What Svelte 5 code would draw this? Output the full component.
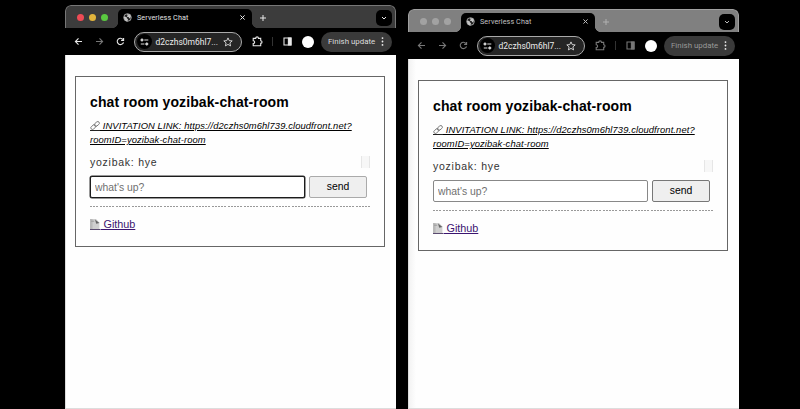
<script>
  const windows = [
    { id: 'front', active: true },
    { id: 'back', active: false }
  ];
</script>

<main>
  {#each windows as win (win.id)}
    <section class="window" class:inactive={!win.active}>
      <header class="tabs">
        <div class="lights"><i></i><i></i><i></i></div>
        <div class="tab">
          <svg class="globe" width="9" height="9" viewBox="0 0 18 18">
            <circle cx="9" cy="9" r="7.6" fill="#222" stroke="#bbb" stroke-width="1.6" />
            <path d="M2 7l5 1 1 3 2 1-1 5c-4 0-7-4-7-8zM8 2l6 1 2 5-3 3-2-3H8l1-3z" fill="#c4c4c4" />
          </svg>
          <span class="title">Serverless Chat</span>
          <svg class="close" width="7" height="7" viewBox="0 0 7 7"><path d="M1.4 1.4l4.2 4.2M5.6 1.4L1.4 5.6" /></svg>
        </div>
        <svg class="plus" width="8" height="8" viewBox="0 0 8 8"><path d="M4 1v6M1 4h6" /></svg>
        <div class="chevron">
          <svg width="6" height="6" viewBox="0 0 6 6"><path d="M1 2l2 2 2-2" /></svg>
        </div>
      </header>
      <nav class="toolbar">
        <svg class="ic back" width="9" height="9" viewBox="0 0 9 9"><path d="M8 4.5H1.5M4.5 1.4L1.4 4.5l3.1 3.1" /></svg>
        <svg class="ic fwd" width="9" height="9" viewBox="0 0 9 9"><path d="M1 4.5h6.5M4.5 1.4l3.1 3.1-3.1 3.1" /></svg>
        <svg class="ic reload" width="9" height="9" viewBox="0 0 9 9"><path d="M7.5 5.3A3.2 3.2 0 1 1 7 2.5M7.6.9v2.5H5.1" /></svg>
        <div class="url">
          <div class="tune">
            <svg width="9" height="8" viewBox="0 0 9 8"><path d="M4.3 2H8.3M.8 6h3.6" /><circle cx="2" cy="2" r="1.1" /><circle cx="6.8" cy="6" r="1.1" /></svg>
          </div>
          <span>d2czhs0m6hl7...</span>
          <svg class="star" width="10" height="10" viewBox="0 0 10 10"><path d="M5 .9l1.2 2.7 3 .3-2.3 2 .7 3L5 7.4 2.4 8.9l.7-3-2.3-2 3-.3z" /></svg>
        </div>
        <svg class="ic puzzle" width="11" height="11" viewBox="0 0 11 11"><path d="M1.2 2.4h2.5c0-2.1 2.8-2.1 2.8 0h2.2v2.4c1.8 0 1.8 2.6 0 2.6v2.4H1.2V7.5c1.9 0 1.9-2.7 0-2.7z" /></svg>
        <div class="sep"></div>
        <svg class="ic panel" width="9" height="9" viewBox="0 0 9 9"><path d="M1 1h7v7H1z" /><path d="M5.4 1H8v7H5.4z" fill="currentColor" /></svg>
        <div class="avatar"></div>
        <div class="update">
          <span>Finish update</span>
          <svg width="3" height="9" viewBox="0 0 3 9"><circle cx="1.5" cy="1.1" r=".9" /><circle cx="1.5" cy="4.5" r=".9" /><circle cx="1.5" cy="7.9" r=".9" /></svg>
        </div>
      </nav>
      <div class="page">
        <article class="card">
          <h1>chat room yozibak-chat-room</h1>
          <div class="invite">
            <svg width="10" height="10" viewBox="0 0 10 10"><g fill="none" stroke="#777" stroke-width=".9"><rect x="-2.9" y="-1.6" width="5.8" height="3.2" rx="1.6" transform="translate(3.4 6) rotate(-40)" /><rect x="-2.9" y="-1.6" width="5.8" height="3.2" rx="1.6" transform="translate(6.8 3) rotate(-40)" /></g><path d="M0 9.5h10" stroke="#222" /></svg><span>&nbsp;INVITATION LINK: https://d2czhs0m6hl739.cloudfront.net?</span><br /><span>roomID=yozibak-chat-room</span>
          </div>
          <div class="message"><span>yozibak: hye</span><i></i></div>
          <div class="form">
            <input placeholder="what's up?" />
            <button>send</button>
          </div>
          <footer>
            <a href="#github"><svg width="10" height="11" viewBox="0 0 10 11"><path d="M0 0h6L9.4 3.6V10H0z" fill="#cfcfcf" /><path d="M0 0h2.5v10H0z" fill="#aaa" opacity=".6" /><path d="M5 .6l4.4 3.4-3.2.8z" fill="#666" /><path d="M1.2 2.2h3" stroke="#888" stroke-width=".7" /><path d="M0 10.5h10" stroke="#5a4a70" /></svg><span>&nbsp;Github</span></a>
          </footer>
        </article>
      </div>
    </section>
  {/each}
</main>

<style>
  :global(body) { margin: 0; background: #000; }
  main {
    box-sizing: border-box;
    width: 800px;
    height: 409px;
    overflow: hidden;
    background: #000;
    display: flex;
    gap: 12px;
    padding: 5px 0 0 65px;
    font-family: "Liberation Sans", Arial, sans-serif;
  }
  * { box-sizing: border-box; }
  svg { display: block; flex: none; overflow: visible; }
  .window {
    width: 331px;
    height: 404px;
    flex: none;
    display: flex;
    flex-direction: column;
    border-radius: 6px 6px 0 0;
    overflow: hidden;
    background: #000;
  }
  .inactive { margin-top: 4px; height: 400px; }
  .tabs {
    height: 23px;
    flex: none;
    display: flex;
    align-items: center;
    background: #3c3c3c;
    border: 1px solid #777;
    border-width: 1px 1px 0;
    border-radius: 6px 6px 0 0;
    padding: 1px 3px 0 11px;
  }
  .inactive .tabs { background: #808080; border-color: #a0a0a0; }
  .lights { display: flex; gap: 5px; width: 41px; flex: none; }
  .lights i { width: 7px; height: 7px; border-radius: 50%; background: #ee4b55; }
  .lights i:nth-child(2) { background: #e1b43c; }
  .lights i:nth-child(3) { background: #5ac840; }
  .inactive .lights i { background: #a2a2a2; }
  .tab {
    position: relative;
    width: 134px;
    height: 19px;
    align-self: flex-end;
    background: #000;
    border-radius: 5px 5px 0 0;
    display: flex;
    align-items: center;
    padding: 0 6px 3px 5px;
    flex: none;
  }
  .tab::before, .tab::after {
    content: "";
    position: absolute;
    bottom: 0;
    width: 5px;
    height: 5px;
  }
  .tab::before { left: -5px; background: radial-gradient(circle at 0 0, transparent 4.6px, #000 5px); }
  .tab::after { right: -5px; background: radial-gradient(circle at 100% 0, transparent 4.6px, #000 5px); }
  .title {
    margin-left: 5px;
    padding-top: 2px;
    flex: 1;
    font: 7.2px/10px Roboto, sans-serif;
    letter-spacing: 0.1px;
    color: #e2e2e2;
    white-space: nowrap;
  }
  .close, .plus, .chevron svg { fill: none; stroke: #e8e8e8; stroke-width: 1; }
  .plus { margin-left: 7px; margin-right: auto; }
  .inactive .plus { stroke: #b0b0b0; }
  .inactive .title { color: #c4c4c4; }
  .inactive .close, .inactive .chevron svg { stroke: #bbb; }
  .chevron {
    width: 16px;
    height: 16px;
    border-radius: 5px;
    background: #000;
    display: flex;
    align-items: center;
    justify-content: center;
  }
  .toolbar {
    height: 27px;
    flex: none;
    background: #000;
    display: flex;
    align-items: center;
    padding: 0 4px 0 9px;
    color: #e8e8e8;
  }
  .ic { fill: none; stroke: currentColor; stroke-width: 1.1; }
  .fwd { margin-left: 12px; color: #777; }
  .reload { margin-left: 12px; }
  .inactive .back, .inactive .fwd, .inactive .reload, .inactive .puzzle, .inactive .panel { color: #777; }
  .url {
    margin-left: 9px;
    width: 108px;
    height: 20px;
    border: 1px solid #aaa;
    border-radius: 10px;
    background: #252525;
    display: flex;
    align-items: center;
    padding: 0 8px 0 2px;
    flex: none;
  }
  .tune {
    width: 15px;
    height: 15px;
    border-radius: 50%;
    background: #000;
    display: flex;
    align-items: center;
    justify-content: center;
  }
  .tune svg { fill: #ddd; stroke: #ddd; stroke-width: 1; }
  .url span {
    margin-left: 3.5px;
    flex: 1;
    font: 8.5px/12px Roboto, sans-serif;
    white-space: nowrap;
    color: #ececec;
  }
  .star { fill: none; stroke: #ddd; stroke-width: 0.9; }
  .puzzle { margin-left: 10px; }
  .sep { width: 1px; height: 9px; background: #333; margin-left: 9px; }
  .panel { margin-left: 10px; }
  .avatar { width: 12px; height: 12px; border-radius: 50%; background: #fff; margin-left: 10px; flex: none; }
  .update {
    margin-left: auto;
    width: 71px;
    height: 20px;
    border-radius: 10px;
    background: #3a3a3a;
    display: flex;
    align-items: center;
    justify-content: space-between;
    padding: 0 8px 0 7px;
    flex: none;
    white-space: nowrap;
  }
  .update span { font: 7.9px/12px Roboto, sans-serif; letter-spacing: 0; color: #dcdcdc; }
  .inactive .update span { color: #999; }
  .update svg { fill: #eee; }
  .page {
    flex: 1;
    background: #fefefe;
    border: solid #ddd;
    border-width: 0 0 1px 1px;
    padding: 21px 11px 0 9px;
  }
  .inactive .page { background: linear-gradient(90deg, #f3f3f3, #fefefe 7px); }
  .card {
    height: 171px;
    border: 1px solid #666;
    padding: 0 14px;
    display: flex;
    flex-direction: column;
    color: #000;
  }
  h1 { margin: 16px 0 0; font-size: 14px; line-height: 18px; letter-spacing: 0.1px; font-weight: 700; white-space: nowrap; }
  .invite {
    margin-top: 8px;
    font-size: 9.4px;
    letter-spacing: 0.1px;
    line-height: 14px;
    font-style: italic;
    white-space: nowrap;
    text-decoration: underline;
  }
  .invite svg { display: inline-block; vertical-align: -2px; }
  .message {
    margin-top: 8px;
    height: 13px;
    display: flex;
    justify-content: space-between;
    align-items: center;
    font-size: 10.5px;
    letter-spacing: 0.75px;
    color: #333;
  }
  .message i { width: 9px; height: 12px; background: #f7f7f7; border: solid #e6e6e6; border-width: 0 1px; }
  .form { margin-top: 8px; display: flex; gap: 4px; }
  input, button { height: 22px; margin: 0; font: 10.4px/14px "Liberation Sans", Arial, sans-serif; border-radius: 2px; }
  input { width: 215px; padding: 0 4px; border: 1px solid #888; background: #fff; outline: none; }
  input::placeholder { color: #707070; opacity: 1; }
  .window:not(.inactive) input { border-color: #1c1c1c; box-shadow: 0 0 0 0.5px #333; }
  button { width: 58px; padding: 0; border: 1px solid #aaa; background: #efefef; color: #000; }
  .inactive button { border-color: #777; }
  footer {
    margin-top: 8px;
    padding-top: 10px;
    background: repeating-linear-gradient(90deg, #999 0 2px, transparent 2px 3.2px) top / 100% 1px no-repeat;
  }
  a { display: inline-flex; align-items: center; font-size: 10.8px; line-height: 14px; color: #3b1470; text-decoration: underline; }
  a svg { margin-top: 2px; }
  a span { margin-left: 0.5px; }
</style>
